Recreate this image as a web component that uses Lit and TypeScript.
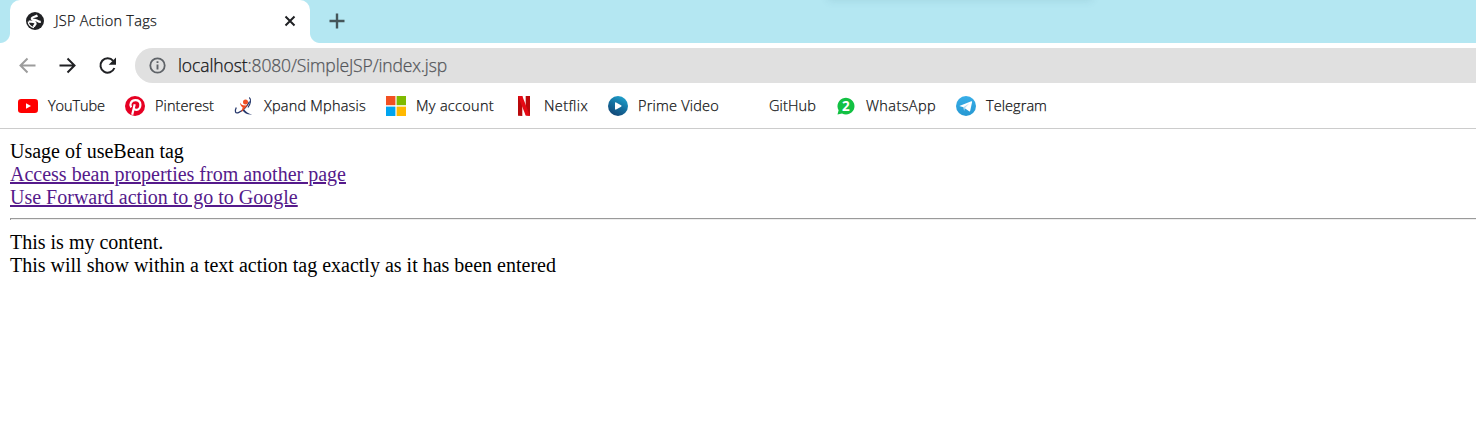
import { LitElement, html, svg, css, TemplateResult } from "lit";
import { customElement, property } from "lit/decorators.js";

/** A single line of text whose tracking is adjusted so it fills `span` pixels. */
@customElement("fit-label")
class FitLabel extends LitElement {
  @property({ type: Number }) span = 0;
  static styles = css`
    :host { display: block; white-space: pre; flex: none; -webkit-text-stroke: .25px currentColor; }
    .line { display: inline-block; }
  `;
  render() {
    return html`<span class="line"><slot></slot></span>`;
  }
  firstUpdated() {
    this.style.width = `${this.span}px`;
    const line = this.renderRoot.querySelector(".line") as HTMLElement;
    const count = (this.textContent || "").length;
    const natural = line.getBoundingClientRect().width;
    line.style.letterSpacing = `${(this.span - natural) / count}px`;
  }
}

const youtube = svg`<rect x="0" y="3" width="20" height="14" rx="3.2" fill="#f00"/><path d="M8 7.2v5.6l5-2.8z" fill="#fff"/>`;

const pinterest = svg`<circle cx="10" cy="10" r="10" fill="#e60023"/><path d="M7.200 18.800 9.700 8.200M6.200 11.400C4.200 8.400 6 4.200 10.400 4.200c3.300 0 5 2 5 4.600 0 2.900-1.700 5.100-3.900 5.100-1.500 0-2.300-.8-2.500-1.800" fill="none" stroke="#fff" stroke-width="2.200"/>`;

const xpand = svg`<path d="M2.300 11.500C.3 15.500 1.500 17.800 4.500 16.600 9.500 14.500 13.500 9.500 15.600 5.500" fill="none" stroke="#25376b" stroke-width="1.300"/><path d="M15.300 1.500c2.200 2 1.300 6.500-1.300 10" fill="none" stroke="#25376b" stroke-width="1.100"/><path d="M9.500 12.500c2.200 3.400 4.800 5.200 8.700 5.900-4.500.5-7.500-1-10-4.500z" fill="#25376b"/><circle cx="11.500" cy="6" r="2.500" fill="#f04e23"/><path d="M6 6.500c1 2 2.200 2.800 5.500 3l2.500-.5-3.200 3.200-3 3.500-.6-.5 1.500-3.700C7 10.300 6 8.600 6 6.500z" fill="#f04e23"/>`;

const microsoft = svg`<path d="M0 0h9.400v9.200H0z" fill="#f25022"/><path d="M10.600 0H20v9.200h-9.400z" fill="#7fba00"/><path d="M0 10.600h9.400V20H0z" fill="#00a4ef"/><path d="M10.600 10.600H20V20h-9.400z" fill="#ffb900"/>`;

const netflix = svg`<path d="M4 0h4.300v20l-4.300-.3zM11.700 0H16v19.700l-4.300-.5z" fill="#b9090b"/><path d="M4 0h4.300L16 20l-4.300-.6z" fill="#e50914"/>`;

const prime = svg`<defs><linearGradient id="sea" x1=".8" y1="0" x2=".25" y2="1"><stop offset="0" stop-color="#20a5d0"/><stop offset=".5" stop-color="#14709f"/><stop offset="1" stop-color="#124373"/></linearGradient></defs><circle cx="10" cy="10" r="10" fill="url(#sea)"/><path d="M7 7.100c0-.8.500-1 1.100-.7l5 2.900c.6.300.6 1.100 0 1.400l-5 2.900c-.6.300-1.100 0-1.100-.7z" fill="#fff"/>`;

const whatsapp = svg`<path d="M1.500 18.500 2.600 14.300A8.500 8.300 0 1 1 6 17.500z" fill="#12c143"/><text x="9.900" y="14.800" text-anchor="middle" font-family="Open Sans, sans-serif" font-weight="700" font-size="13.500" fill="#fff">2</text>`;

const telegram = svg`<defs><linearGradient id="sky" x1="0" y1="0" x2="0" y2="1"><stop offset="0" stop-color="#38aee8"/><stop offset="1" stop-color="#2698d2"/></linearGradient></defs><circle cx="10" cy="10" r="10" fill="url(#sky)"/><path d="M3.300 10 15.300 5.200c.6-.2.900.1.800.7l-1.900 8.900c-.1.700-.6.800-1.100.4L7.400 11.300z" fill="#fff"/><path d="M7.300 11.200 13.200 7.400 9 12l-.9 3z" fill="#b9dcf0"/>`;

interface Bookmark { name: string; span: number; art: TemplateResult | unknown; }

const bookmarks: Bookmark[] = [
  { name: "YouTube", span: 57, art: youtube },
  { name: "Pinterest", span: 59, art: pinterest },
  { name: "Xpand Mphasis", span: 102, art: xpand },
  { name: "My account", span: 78, art: microsoft },
  { name: "Netflix", span: 44, art: netflix },
  { name: "Prime Video", span: 81, art: prime },
  { name: "GitHub", span: 47, art: svg`` },
  { name: "WhatsApp", span: 70, art: whatsapp },
  { name: "Telegram", span: 61, art: telegram },
];

@customElement("app-root")
class AppRoot extends LitElement {
  static styles = css`
    :host { display: block; height: 438px; overflow: hidden; background: #fff; font-family: "Open Sans", "Noto Sans", sans-serif; color: #111214; }
    svg { display: block; flex: none; }
    .strip { position: relative; display: flex; height: 43px; background: #b4e7f2; overflow: hidden; }
    .tab { position: relative; box-sizing: border-box; display: flex; align-items: center; width: 300px; height: 43px; margin-left: 10px; padding: 0 14px 1px 15px; background: #fff; border-radius: 10px 10px 0 0; font-size: 14.500px; font-weight: 300; }
    .tab::before, .tab::after { content: ""; position: absolute; bottom: 0; width: 10px; height: 10px; }
    .tab::before { left: -10px; background: radial-gradient(circle at 0 0, transparent 9.500px, #fff 10.500px); }
    .tab::after { right: -10px; background: radial-gradient(circle at 100% 0, transparent 9.500px, #fff 10.500px); }
    .title { margin: 0 0 2px 10px; }
    .close { margin-left: auto; }
    .plus { margin: 13px 0 0 19px; }
    .shade { position: absolute; left: 828px; top: -8px; width: 264px; height: 8px; box-shadow: 0 0 8px rgba(50, 100, 120, .15); }
    .tools { display: flex; align-items: center; height: 45px; padding-left: 18px; box-sizing: border-box; }
    .tools > svg { margin-right: 20px; }
    .tools > .reload { margin-right: 17px; }
    .address { display: flex; align-items: center; flex: 1; height: 35px; padding-left: 13px; border-radius: 18px 0 0 18px; background: #e0e0e0; font-size: 17.500px; font-weight: 300; }
    .url { display: flex; margin: 0 0 2px 11px; }
    .path { color: #54565a; }
    .marks { display: flex; gap: 20px; height: 40px; padding-left: 18px; border-bottom: 1px solid #ccc; font-size: 14.500px; font-weight: 300; }
    .mark { display: flex; align-items: center; gap: 10px; height: 36px; }
    .mark fit-label { margin-bottom: 2px; }
    .page { padding: 11px 0 0 10px; font: 20px/23px "Liberation Serif", serif; color: #000; }
    .page a { color: #551a8b; text-decoration: underline; text-decoration-thickness: 2px; }
    .line { display: block; width: max-content; }
    .rule { height: 1px; margin: 9px 0 11px; border-top: 1px solid #9a9a9a; border-left: 1px solid #9a9a9a; background: #eee; }
  `;

  render() {
    return html`
      <div class="strip">
        <div class="tab">
          <svg width="20" height="20" viewBox="0 0 20 20"><circle cx="10" cy="10" r="9" fill="#202124"/><path d="M12.500 4.500C10 6 7.300 5.700 6.800 7.300 6.500 9 9.500 8.600 11.200 9.200c1.600.6 1.600 1.800 4.600 1.700M3.800 10.700c2.700-.2 5.700-.1 6.700 1.400.7 1.500-1.400 1.500-1.600 3.700" fill="none" stroke="#fff" stroke-width="2.200"/><path d="M3.200 10.500c.3 3 2.600 5.300 5.800 6.300" fill="none" stroke="#fff" stroke-width="1.200"/></svg>
          <fit-label class="title" span="102">JSP Action Tags</fit-label>
          <svg class="close" width="12" height="12" viewBox="0 0 12 12"><path d="m1.500 1.500 9 9m0-9-9 9" stroke="#202124" stroke-width="2"/></svg>
        </div>
        <svg class="plus" width="16" height="16" viewBox="0 0 16 16"><path d="M8 .5v15M.5 8h15" stroke="#45565a" stroke-width="2.400"/></svg>
        <div class="shade"></div>
      </div>
      <div class="tools">
        <svg width="20" height="20" viewBox="0 0 20 20"><path d="M17.500 9.500H3M9.500 2.500l-7 7 7 7" fill="none" stroke="#9c9c9c" stroke-width="2"/></svg>
        <svg width="20" height="20" viewBox="0 0 20 20"><path d="M1.500 9.500H16M9.500 2.500l7 7-7 7" fill="none" stroke="#202124" stroke-width="2"/></svg>
        <svg class="reload" width="20" height="20" viewBox="0 0 20 20"><path d="M15.200 4.800A7.200 7.200 0 1 0 16.400 12" fill="none" stroke="#202124" stroke-width="2"/><path d="M18 1.500v7.300h-7.300z" fill="#202124"/></svg>
        <div class="address">
          <svg width="19" height="19" viewBox="0 0 19 19"><circle cx="9.500" cy="9.500" r="7.200" fill="none" stroke="#5f6368" stroke-width="1.800"/><path d="M9.500 5.200v1.800M9.500 8.500v5" stroke="#5f6368" stroke-width="1.900"/></svg>
          <div class="url"><fit-label span="69.500">localhost</fit-label><fit-label class="path" span="199.500">:8080/SimpleJSP/index.jsp</fit-label></div>
        </div>
      </div>
      <div class="marks">
        ${bookmarks.map(b => html`<div class="mark"><svg width="20" height="20" viewBox="0 0 20 20">${b.art}</svg><fit-label span=${b.span}>${b.name}</fit-label></div>`)}
      </div>
      <div class="page">
        <span class="line">Usage of useBean tag</span>
        <a class="line">Access bean properties from another page</a>
        <a class="line">Use Forward action to go to Google</a>
        <div class="rule"></div>
        <span class="line">This is my content.</span>
        <span class="line">This will show within a text action tag exactly as it has been entered</span>
      </div>`;
  }
}
